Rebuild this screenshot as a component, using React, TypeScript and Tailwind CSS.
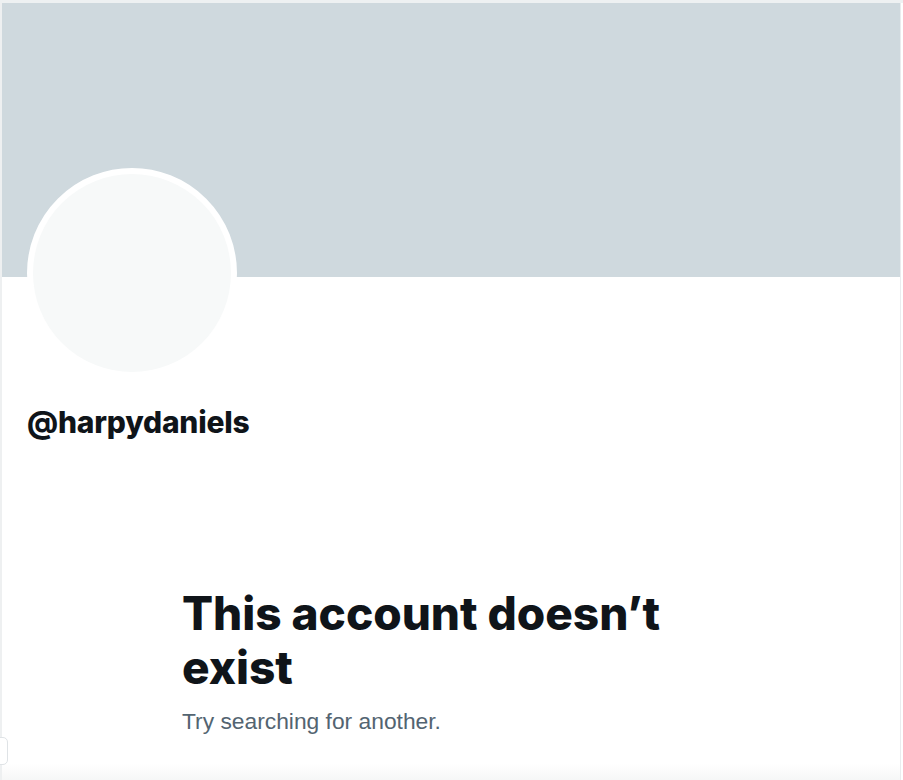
import React from 'react';

const App: React.FC = () => {
  return (
    <div className="h-[780px] w-[903px] overflow-hidden bg-white font-['Liberation_Sans',Arial,sans-serif] text-[#0f1419] flex flex-col relative">
      <div className="h-[3px] bg-[#eef1f2] shrink-0" />

      <div className="flex-1 flex flex-col border-l-2 border-[#eef0f1] mr-[2px] border-r border-r-[#e9ecee]">
        {/* banner */}
        <div className="h-[274px] bg-[#cfd9de] shrink-0" />

        {/* avatar */}
        <div className="pl-[25px] -mt-[109px]">
          <div className="w-[210px] h-[210px] rounded-full border-[6px] border-white bg-[#f7f9f9]" />
        </div>

        {/* handle */}
        <div className="pl-[25px] mt-[26px]">
          <div className="font-['Inter',sans-serif] text-[30px] leading-[36px] font-extrabold tracking-[-0.2px]">@harpydaniels</div>
        </div>

        {/* empty state */}
        <div className="pl-[180px] mt-[146px]">
          <div className="w-[500px]">
            <h1 className="font-['Inter',sans-serif] text-[46px] leading-[54px] font-extrabold tracking-[-0.05px]">This account doesn’t exist</h1>
            <p className="mt-[13px] text-[22.8px] leading-[28px] text-[#536471]">Try searching for another.</p>
          </div>
        </div>

        <div className="flex-1" />
        <div className="h-[16px] bg-gradient-to-b from-white to-[#f6f7f7]" />
      </div>

      {/* partially hidden side tab */}
      <div className="absolute left-[-6px] top-[737px] w-[14px] h-[28px] rounded-[5px] border border-[#dfe3e6] bg-white" />
    </div>
  );
};

export default App;
